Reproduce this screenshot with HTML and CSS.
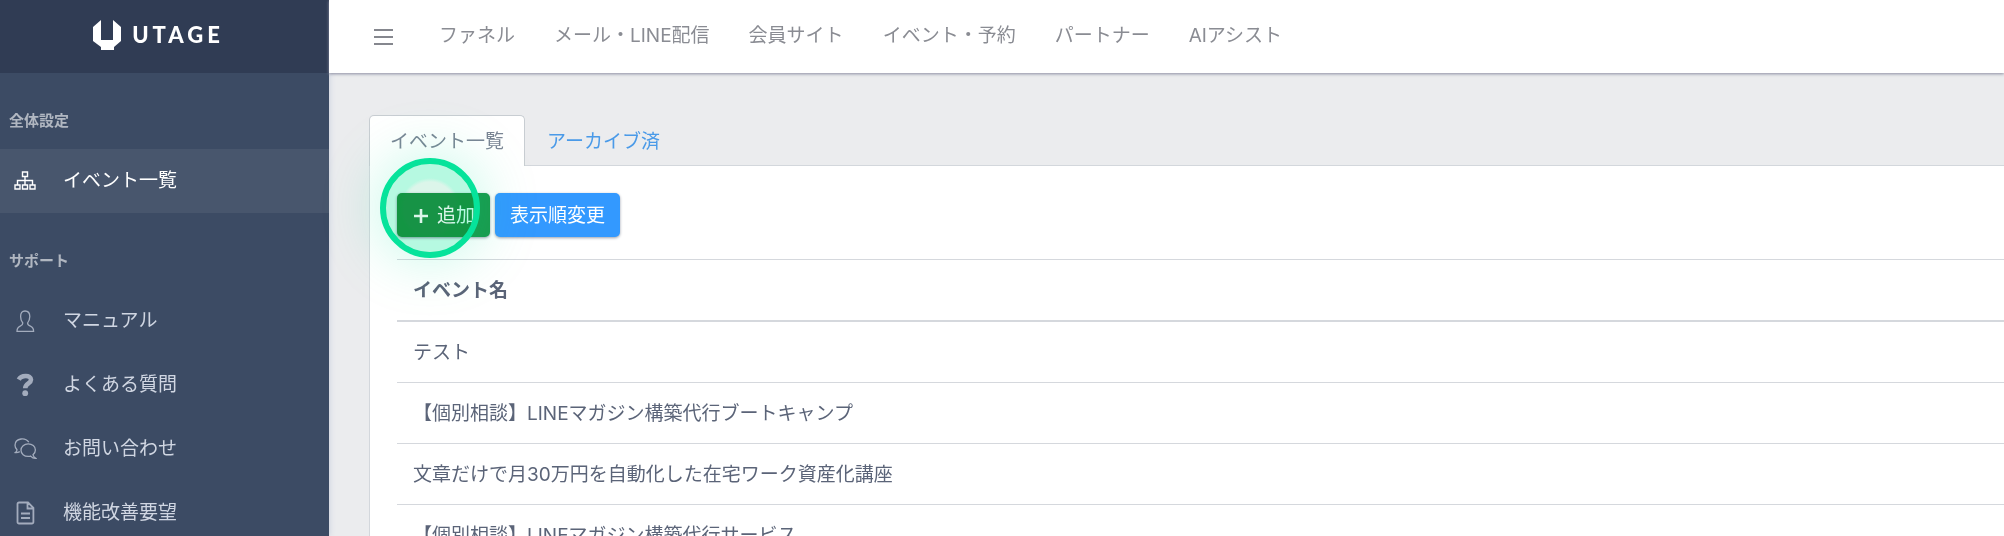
FILE: index.html
```html
<!DOCTYPE html>
<html lang="ja">
<head>
  <meta charset="UTF-8" />
  <meta name="viewport" content="width=device-width, initial-scale=1.0"/>
  <title>イベント一覧 | UTAGE</title>
  <link rel="stylesheet" href="styles.css">
</head>
<body>
  <aside class="sidebar">
    <a class="brand" href="#">
      <svg class="brand-mark" viewBox="0 0 28 32" width="28" height="32" fill="#fff"><path d="M8 1v20h12V1l8 7v14l-7 6v3H8v-3l-8-6V8z"/></svg>
      <span>UTAGE</span>
    </a>
    <h2 class="menu-title">全体設定</h2>
    <nav>
      <a class="menu-item active" href="#">
        <svg viewBox="0 0 24 24" width="24" height="24" fill="none" stroke="currentColor" stroke-width="1.4"><path d="M9.500 3h5v4.500h-5zM2 16h5v4H2zM9.500 16h5v4h-5zM17 16h5v4h-5zM12 7.500V16M4.500 16v-4.500h15V16"/></svg>
        イベント一覧
      </a>
    </nav>
    <h2 class="menu-title">サポート</h2>
    <nav>
      <a class="menu-item" href="#">
        <svg viewBox="0 0 24 24" width="24" height="24" fill="none" stroke="currentColor" stroke-width="1.300"><path d="M9.800 14C8 12 7.600 10 7.600 7.500 7.600 4 9 2 12 2s4.800 2 4.800 5.500C16.800 10 16 12 14.600 14c0 2 .8 2.400 2.800 3.200 2.400 1 3.200 2 3.200 5.200H4c0-3.200.8-4.200 3.200-5.200 2-.8 2.600-1.200 2.600-3.200z"/></svg>
        マニュアル
      </a>
      <a class="menu-item" href="#">
        <svg viewBox="0 0 24 24" width="24" height="24" fill="none" stroke="currentColor"><path stroke-width="4.600" d="M5.800 6.600C8 2.200 18 1.400 18 6.800c0 3.600-5.800 3.600-5.800 8.400"/><circle cx="12.200" cy="20.200" r="2.900" fill="currentColor" stroke="none"/></svg>
        よくある質問
      </a>
      <a class="menu-item" href="#">
        <svg viewBox="0 0 24 24" width="24" height="24" fill="none" stroke="currentColor" stroke-width="1.300"><path d="M15.800 5.200C14 2.600 11 1.600 8 2 4.400 2.500 2 5 2 8.200c0 1.800.8 3.400 2 4.600 0 1.200-.6 2-1.600 2.800 1.600.2 3-.2 4.400-1"/><path d="M20 17.800c1.600-1.400 2.400-3 2.400-4.800 0-3.600-3.200-6.200-7.200-6.200S8 9.600 8 13.200s3.200 6.200 7.200 6.200c.8 0 1.600 0 2.400-.3 1.400 1.500 3.200 2.500 5.200 2.300-1.400-1-2.400-2-2.800-3.600z"/></svg>
        お問い合わせ
      </a>
      <a class="menu-item" href="#">
        <svg viewBox="0 0 24 24" width="24" height="24" fill="none" stroke="currentColor" stroke-width="1.800"><path d="M6 1.500h9l5.400 5.400V21a1.500 1.500 0 0 1-1.500 1.500H6A1.500 1.500 0 0 1 4.500 21V3A1.500 1.500 0 0 1 6 1.500zM14.500 1.500v6h6M8 12.500h9M8 17h9"/></svg>
        機能改善要望
      </a>
    </nav>
  </aside>

  <div class="page">
    <header class="topbar">
      <button class="toggle" type="button" aria-label="メニュー">
        <svg viewBox="0 0 20 18" width="20" height="18" stroke="currentColor" stroke-width="2"><path d="M0 2h19M0 9h19M0 16h19"/></svg>
      </button>
      <nav class="topnav">
        <a href="#">ファネル</a>
        <a href="#">メール・LINE配信</a>
        <a href="#">会員サイト</a>
        <a href="#">イベント・予約</a>
        <a href="#">パートナー</a>
        <a href="#">AIアシスト</a>
      </nav>
    </header>

    <main>
      <div class="tabs">
        <a class="tab active" href="#">イベント一覧</a>
        <a class="tab" href="#">アーカイブ済</a>
      </div>
      <section class="panel">
        <div class="actions">
          <button class="btn btn-add" type="button">
            <svg viewBox="0 0 17 16" width="17" height="16" stroke="currentColor" stroke-width="2.600"><path d="M9 1v14M2 8h14"/></svg>
            追加
            <span class="pointer"></span>
          </button>
          <button class="btn btn-order" type="button">表示順変更</button>
        </div>
        <table class="events">
          <thead>
            <tr><th>イベント名</th></tr>
          </thead>
          <tbody>
            <tr><td>テスト</td></tr>
            <tr><td>【個別相談】LINEマガジン構築代行ブートキャンプ</td></tr>
            <tr><td>文章だけで月30万円を自動化した在宅ワーク資産化講座</td></tr>
            <tr><td>【個別相談】LINEマガジン構築代行サービス</td></tr>
          </tbody>
        </table>
      </section>
    </main>
  </div>
</body>
</html>
```
FILE: styles.css
```css
* {
  box-sizing: border-box;
}
body {
  margin: 0;
  display: flex;
  height: 100vh;
  overflow: hidden;
  font-family: Inter, "Noto Sans CJK JP", sans-serif;
  font-size: 19px;
  line-height: 28px;
  color: #5b6478;
  background: #ebecee;
}
a {
  color: inherit;
  text-decoration: none;
}

/* sidebar */
.sidebar {
  flex: 0 0 329px;
  color: #d0d6e2;
  background: #3c4b64;
  box-shadow: 0 0 6px #c3cadb;
}
.brand {
  display: flex;
  align-items: center;
  justify-content: center;
  gap: 11px;
  height: 73px;
  padding-bottom: 4px;
  padding-right: 12px;
  color: #fff;
  background: #303c54;
  font-family: Lato, sans-serif;
  font-size: 22px;
  font-weight: 900;
  letter-spacing: 4px;
}
.menu-title {
  margin: 0;
  padding: 36px 9px 16px;
  font-size: 15px;
  font-weight: 700;
  line-height: 24px;
  color: #b1b7c1;
}
.menu-item {
  display: flex;
  align-items: center;
  gap: 26px;
  height: 64px;
  padding: 0 13px;
}
.menu-item svg {
  color: #a3acbd;
}
.menu-item.active,
.menu-item.active svg {
  color: #fff;
}
.menu-item.active {
  background: #48566d;
}

/* header */
.page {
  flex: 1;
  min-width: 0;
}
.topbar {
  display: flex;
  align-items: center;
  height: 73px;
  padding-left: 45px;
  background: #fff;
  box-shadow: 0 1px 3px #8a8ca0;
}
.toggle {
  display: flex;
  margin-right: 45px;
  padding: 0;
  border: 0;
  color: #85878e;
  background: none;
}
.topnav {
  display: flex;
  gap: 39px;
  padding-bottom: 1px;
  color: #8a8c93;
  white-space: nowrap;
}

/* content */
main {
  padding: 42px 0 0 40px;
}
.tabs {
  display: flex;
  gap: 1px;
}
.tab {
  height: 50px;
  padding: 12px 20px 10px;
  border: 1px solid transparent;
  border-bottom: 0;
  border-radius: 5px 5px 0 0;
  color: #4a9ae8;
}
.tab.active {
  position: relative;
  height: 51px;
  margin-bottom: -1px;
  border-color: #c8cdd2;
  color: #7b8595;
  background: #fff;
}
.panel {
  padding: 27px 0 0 27px;
  border: 1px solid #d3d7dc;
  border-right: 0;
  background: #fff;
}
.actions {
  display: flex;
  gap: 5px;
  margin-bottom: 22px;
}
.btn {
  display: flex;
  align-items: center;
  height: 44px;
  padding: 1px 15px 0;
  border: 0;
  border-radius: 5px;
  color: #fff;
  font: inherit;
  box-shadow: 0 1px 3px #9aa0ac;
}
.btn-add {
  position: relative;
  gap: 8px;
  background: #1a994c;
}
.btn-order {
  background: #3399ff;
}

/* click marker over the add button */
.pointer {
  position: absolute;
  top: -35px;
  left: -17px;
  width: 100px;
  height: 100px;
  border: 6px solid #06e39b;
  border-radius: 50%;
  box-shadow: 0 0 60px rgba(0, 228, 155, .25);
  pointer-events: none;
}
.pointer::before {
  content: "";
  position: absolute;
  inset: 0;
  border-radius: 50%;
  background: radial-gradient(circle, #dcf5ea 26px, #b6f9e1 30px);
  mix-blend-mode: multiply;
}

.events {
  width: 100%;
  border-collapse: collapse;
}
.events th,
.events td {
  padding: 17px 16px 15px;
  border-top: 1px solid #d5d8dd;
  text-align: left;
}
.events th {
  border-bottom: 2px solid #d5d8dd;
  font-weight: 700;
}
```
